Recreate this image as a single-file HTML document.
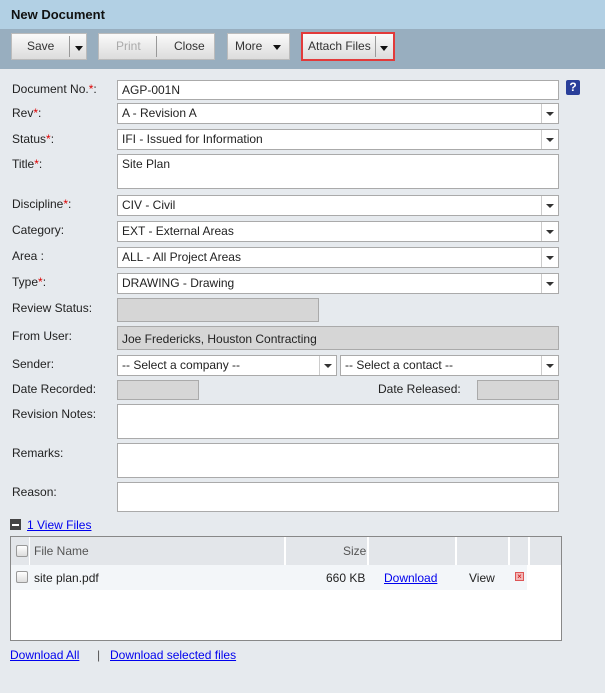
<!DOCTYPE html><html><head><style>
body{margin:0;width:605px;height:693px;background:#e6eaee;font-family:"Liberation Sans",sans-serif;font-size:12px;color:#222;position:relative;overflow:hidden}
.a{position:absolute}
.hdr{left:0;top:0;width:605px;height:29px;background:#b2d0e4;border-bottom:1px solid #9bb;}
.hdr b{position:absolute;left:11px;top:7px;font-size:13px;color:#111}
.tb{left:0;top:29px;width:605px;height:40px;background:#98aebf}
.btn{position:absolute;top:33px;height:27px;background:linear-gradient(#fafafa,#dcdcdc);border:1px solid #bbb;box-sizing:border-box;line-height:25px;color:#333}
.btn span{position:absolute;top:0}
.sep{position:absolute;top:2px;bottom:2px;width:1px;background:#999}
.tri{position:absolute;width:0;height:0;border-left:4px solid transparent;border-right:4px solid transparent;border-top:5px solid #111}
.lbl{position:absolute;left:12px;color:#222}
.req{color:#d00}
.in{position:absolute;background:#fff;border:1px solid #aaa;box-sizing:border-box;padding:2px 4px;line-height:15px}
.gr{background:#d6d6d6;border-color:#aaa}
.sel .arr{position:absolute;right:0;top:0;bottom:0;width:16px;border-left:1px solid #ccc;background:#fff}
.sel .arr i{position:absolute;left:4px;top:8px;width:0;height:0;border-left:4px solid transparent;border-right:4px solid transparent;border-top:4px solid #333}
a{color:#00e;text-decoration:underline}
.cb{position:absolute;width:10px;height:10px;border:1px solid #999;border-radius:2px;background:linear-gradient(#fff,#ddd)}
</style></head><body>
<div class="a hdr"><b>New Document</b></div>
<div class="a tb"></div>
<div class="btn" style="left:11px;width:76px"><span style="left:15px">Save</span><div class="sep" style="left:57px"></div><div class="tri" style="left:63px;top:12px"></div></div>
<div class="btn" style="left:98px;width:117px"><span style="left:17px;color:#aaa">Print</span><div class="sep" style="left:57px"></div><span style="left:75px">Close</span></div>
<div class="btn" style="left:227px;width:63px"><span style="left:7px">More</span><div class="tri" style="left:45px;top:11px"></div></div>
<div class="a" style="left:301px;top:32px;width:94px;height:29px;border:2px solid #e23a3a;box-sizing:border-box;background:linear-gradient(#fafafa,#dcdcdc);line-height:25px;color:#333"><span style="position:absolute;left:5px">Attach Files</span><div class="sep" style="left:72px"></div><div class="tri" style="left:77px;top:12px"></div></div>

<div class="lbl" style="top:82px">Document No.<span class="req">*</span>:</div>
<div class="in" style="left:117px;top:80px;width:442px;height:20px">AGP-001N</div>
<div class="a" style="left:566px;top:80px;width:14px;height:15px;background:#2a3f9a;border-radius:2px;color:#fff;font-weight:bold;font-size:12px;text-align:center;line-height:15px">?</div>

<div class="lbl" style="top:106px">Rev<span class="req">*</span>:</div>
<div class="in sel" style="left:117px;top:103px;width:442px;height:21px">A - Revision A<div class="arr"><i></i></div></div>
<div class="lbl" style="top:132px">Status<span class="req">*</span>:</div>
<div class="in sel" style="left:117px;top:129px;width:442px;height:21px">IFI - Issued for Information<div class="arr"><i></i></div></div>
<div class="lbl" style="top:157px">Title<span class="req">*</span>:</div>
<div class="in" style="left:117px;top:154px;width:442px;height:35px">Site Plan</div>
<div class="lbl" style="top:197px">Discipline<span class="req">*</span>:</div>
<div class="in sel" style="left:117px;top:195px;width:442px;height:21px">CIV - Civil<div class="arr"><i></i></div></div>
<div class="lbl" style="top:223px">Category:</div>
<div class="in sel" style="left:117px;top:221px;width:442px;height:21px">EXT - External Areas<div class="arr"><i></i></div></div>
<div class="lbl" style="top:249px">Area :</div>
<div class="in sel" style="left:117px;top:247px;width:442px;height:21px">ALL - All Project Areas<div class="arr"><i></i></div></div>
<div class="lbl" style="top:275px">Type<span class="req">*</span>:</div>
<div class="in sel" style="left:117px;top:273px;width:442px;height:21px">DRAWING - Drawing<div class="arr"><i></i></div></div>
<div class="lbl" style="top:301px">Review Status:</div>
<div class="in gr" style="left:117px;top:298px;width:202px;height:24px"></div>
<div class="lbl" style="top:329px">From User:</div>
<div class="in gr" style="left:117px;top:326px;width:442px;height:24px;padding-top:5px">Joe Fredericks, Houston Contracting</div>
<div class="lbl" style="top:357px">Sender:</div>
<div class="in sel" style="left:117px;top:355px;width:220px;height:21px">-- Select a company --<div class="arr"><i></i></div></div>
<div class="in sel" style="left:340px;top:355px;width:219px;height:21px">-- Select a contact --<div class="arr"><i></i></div></div>
<div class="lbl" style="top:382px">Date Recorded:</div>
<div class="in gr" style="left:117px;top:380px;width:82px;height:20px"></div>
<div class="a" style="left:378px;top:382px">Date Released:</div>
<div class="in gr" style="left:477px;top:380px;width:82px;height:20px"></div>
<div class="lbl" style="top:407px">Revision Notes:</div>
<div class="in" style="left:117px;top:404px;width:442px;height:35px"></div>
<div class="lbl" style="top:446px">Remarks:</div>
<div class="in" style="left:117px;top:443px;width:442px;height:35px"></div>
<div class="lbl" style="top:485px">Reason:</div>
<div class="in" style="left:117px;top:482px;width:442px;height:30px"></div>

<div class="a" style="left:10px;top:519px;width:11px;height:11px;background:#444"><div style="position:absolute;left:2px;top:5px;width:7px;height:2px;background:#fff"></div></div>
<a class="a" style="left:27px;top:518px">1 View Files</a>
<div class="a" style="left:10px;top:536px;width:552px;height:105px;background:#fff;border:1px solid #888;box-sizing:border-box">
<div class="a" style="left:0;top:0;width:550px;height:28px;background:#e3e6ea"></div>
<div class="a" style="left:18px;top:0;width:1px;height:53px;background:#fff"></div>
<div class="a" style="left:273px;top:0;width:2px;height:53px;background:#fff"></div>
<div class="a" style="left:356px;top:0;width:2px;height:53px;background:#fff"></div>
<div class="a" style="left:444px;top:0;width:2px;height:53px;background:#fff"></div>
<div class="a" style="left:497px;top:0;width:2px;height:53px;background:#fff"></div>
<div class="a" style="left:517px;top:0;width:2px;height:28px;background:#fff"></div>
<div class="a" style="left:0;top:28px;width:516px;height:25px;background:#f3f6f9"></div>
<div class="cb" style="left:5px;top:8px"></div>
<div class="a" style="left:23px;top:7px;color:#555">File Name</div>
<div class="a" style="left:332px;top:7px;color:#555">Size</div>
<div class="cb" style="left:5px;top:34px"></div>
<div class="a" style="left:23px;top:34px">site plan.pdf</div>
<div class="a" style="left:315px;top:34px">660 KB</div>
<a class="a" style="left:373px;top:34px">Download</a>
<div class="a" style="left:458px;top:34px">View</div>
<div class="a" style="left:504px;top:35px;width:9px;height:9px;background:#f3b5b5;border:1px solid #d55;box-sizing:border-box;color:#c00;font-size:8px;line-height:7px;text-align:center">×</div>
</div>
<a class="a" style="left:10px;top:648px">Download All</a>
<div class="a" style="left:97px;top:648px;color:#555">|</div>
<a class="a" style="left:110px;top:648px">Download selected files</a>
</body></html>
